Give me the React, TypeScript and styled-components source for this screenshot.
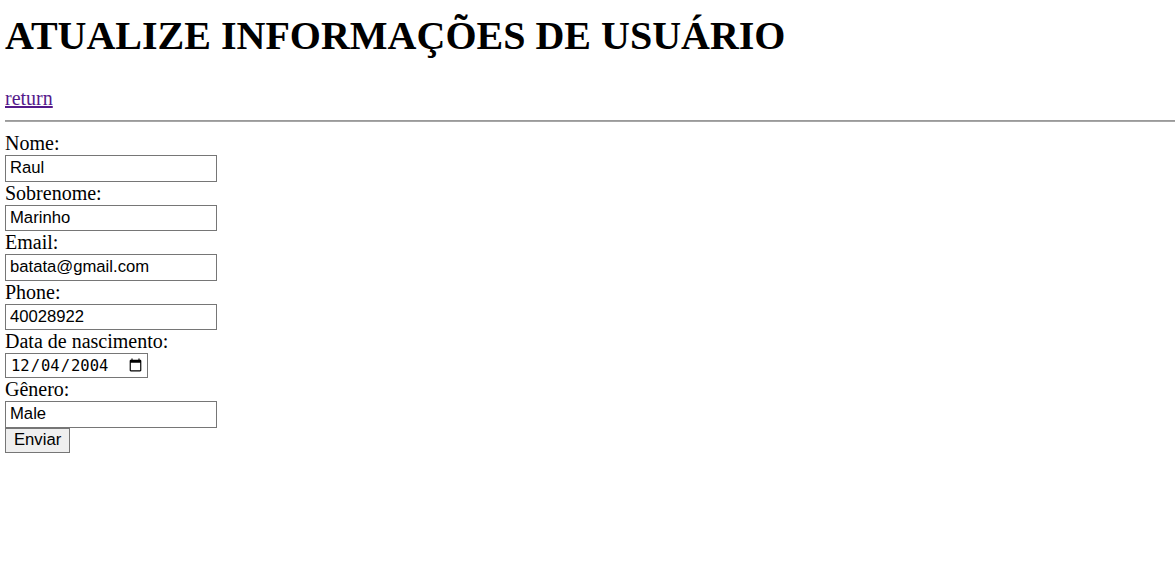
import React from "react";
import styled, { createGlobalStyle } from "styled-components";

const GlobalStyle = createGlobalStyle`
  html, body {
    margin: 0;
    padding: 0;
    background: #ffffff;
  }
  body {
    font-family: "Liberation Serif", "Times New Roman", serif;
    color: #000000;
  }
`;

const Page = styled.div`
  padding: 0 0 0 5px;
  font-family: "Liberation Serif", "Times New Roman", serif;
  font-size: 20px;
  line-height: 23px;
`;

const Title = styled.h1`
  margin: 13px 0 28px;
  font-size: 40px;
  line-height: 46px;
  font-weight: 700;
`;

const BackLink = styled.a`
  display: inline-block;
  color: #551a8b;
  text-decoration: underline;
  font-size: 20px;
  line-height: 23px;
`;

const Divider = styled.hr`
  margin: 10px 0;
  height: 0;
  border: none;
  border-top: 1px solid #9a9a9a;
  border-bottom: 1px solid #a6a6a6;
`;

const Form = styled.form`
  display: flex;
  flex-direction: column;
  align-items: flex-start;
`;

const Label = styled.label`
  display: block;
  font-size: 20px;
  line-height: 23px;
`;

const TextInput = styled.input`
  box-sizing: border-box;
  width: 212px;
  height: 26.5px;
  margin: 0;
  padding: 0 4px;
  border: 1px solid #767676;
  border-radius: 0;
  background: #ffffff;
  font-family: "Liberation Sans", Arial, sans-serif;
  font-size: 16.67px;
  color: #000000;
  outline: none;
`;

const DateInput = styled.input`
  box-sizing: border-box;
  width: 143px;
  height: 25px;
  margin: 0;
  padding: 0 2px 0 4px;
  border: 1px solid #767676;
  border-radius: 0;
  background: #ffffff;
  font-family: "DejaVu Sans Mono", "Liberation Mono", monospace;
  font-size: 15.5px;
  color: #000000;
  outline: none;
`;

const SubmitButton = styled.button`
  box-sizing: border-box;
  height: 25.5px;
  margin: 0;
  padding: 0 8px;
  border: 1px solid #767676;
  border-radius: 0;
  background: #efefef;
  font-family: "Liberation Sans", Arial, sans-serif;
  font-size: 16.67px;
  color: #000000;
  line-height: 1;
`;

const fields = [
  { id: "nome", label: "Nome:", value: "Raul" },
  { id: "sobrenome", label: "Sobrenome:", value: "Marinho" },
  { id: "email", label: "Email:", value: "batata@gmail.com" },
  { id: "phone", label: "Phone:", value: "40028922" },
];

export default function App() {
  return (
    <>
      <GlobalStyle />
      <Page>
        <Title>ATUALIZE INFORMAÇÕES DE USUÁRIO</Title>
        <BackLink href="#">return</BackLink>
        <Divider />
        <Form onSubmit={(e) => e.preventDefault()}>
          {fields.map((f) => (
            <React.Fragment key={f.id}>
              <Label htmlFor={f.id}>{f.label}</Label>
              <TextInput id={f.id} type="text" defaultValue={f.value} />
            </React.Fragment>
          ))}
          <Label htmlFor="nascimento">Data de nascimento:</Label>
          <DateInput id="nascimento" type="date" defaultValue="2004-12-04" />
          <Label htmlFor="genero">Gênero:</Label>
          <TextInput id="genero" type="text" defaultValue="Male" />
          <SubmitButton type="submit">Enviar</SubmitButton>
        </Form>
      </Page>
    </>
  );
}
